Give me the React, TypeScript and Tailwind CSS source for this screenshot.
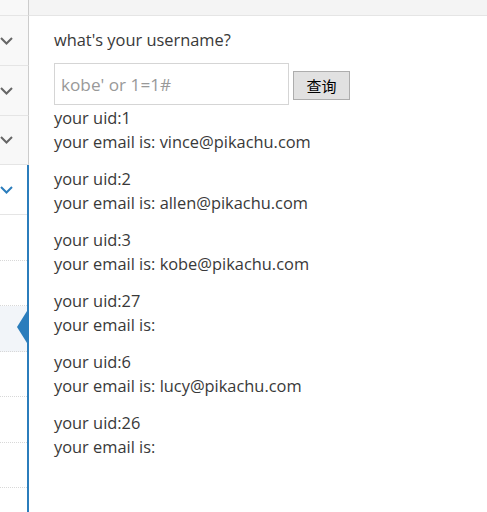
import React from 'react';

const RESULTS = [
  { uid: '1', email: 'vince@pikachu.com' },
  { uid: '2', email: 'allen@pikachu.com' },
  { uid: '3', email: 'kobe@pikachu.com' },
  { uid: '27', email: '' },
  { uid: '6', email: 'lucy@pikachu.com' },
  { uid: '26', email: '' },
];

function Chevron({ color }: { color: string }) {
  return (
    <svg width="13" height="8" viewBox="0 0 13 8" className="shrink-0">
      <polyline points="1,1 6.5,6.5 12,1" fill="none" stroke={color} strokeWidth="2" />
    </svg>
  );
}

function Sidebar() {
  return (
    <aside className="w-[29px] h-full flex flex-col shrink-0">
      {/* collapsed menu groups */}
      <div className="h-[16px] bg-[#f8f8f8] border-b border-r border-[#e5e5e5] border-r-[#cccccc]" />
      {[0, 1].map(i => (
        <div
          key={i}
          className="h-[50px] flex items-center bg-[#f8f8f8] border-b border-r border-[#e5e5e5] border-r-[#cccccc]"
        >
          <Chevron color="#666666" />
        </div>
      ))}
      <div className="h-[49px] flex items-center bg-[#f8f8f8] border-b border-r border-[#e5e5e5] border-r-[#cccccc]">
        <Chevron color="#666666" />
      </div>

      {/* open group */}
      <div className="flex-1 flex flex-col border-r-2 border-[#2b7dbc]">
        <div className="h-[50px] flex items-center bg-white border-b border-[#e5e5e5]">
          <Chevron color="#2b7dbc" />
        </div>
        {[0, 1, 2, 3, 4, 5].map(i => (
          <div
            key={i}
            className={`relative h-[45.5px] shrink-0 border-b border-dotted border-[#d8d8d8] ${
              i === 2 ? 'bg-[#f2f5f9]' : 'bg-white'
            }`}
          >
            {i === 2 && (
              <svg width="10" height="32" viewBox="0 0 10 32" className="absolute right-0 top-[5px]">
                <polygon points="10,0 0,16 10,32" fill="#2b7dbc" />
              </svg>
            )}
          </div>
        ))}
      </div>
    </aside>
  );
}

export default function App() {
  return (
    <div
      className="w-[487px] h-[512px] overflow-hidden flex bg-white text-[#393939]"
      style={{ fontFamily: '"Open Sans", "Noto Sans CJK SC", sans-serif' }}
    >
      <Sidebar />
      <main className="flex-1 flex flex-col min-w-0">
        <div className="h-[16px] bg-[#f4f4f4] border-b border-[#e5e5e5] shrink-0" />
        <div className="pl-[25px] pt-[12px] text-[16.4px] leading-[24px]">
          <p>what's your username?</p>
          <form className="flex items-center gap-[5px] mt-[11px]" onSubmit={e => e.preventDefault()}>
            <input
              className="w-[235px] h-[42px] border border-[#d5d5d5] px-[6px] text-[17.2px] text-[#555] placeholder:text-[#999] outline-none"
              placeholder="kobe' or 1=1#"
            />
            <button
              type="submit"
              className="w-[57px] h-[29px] mt-[3px] -ml-[1px] bg-[#e1e1e1] border border-[#adadad] text-[15px] leading-none text-black"
              style={{ fontFamily: '"Noto Sans CJK SC", sans-serif' }}
            >
              查询
            </button>
          </form>
          <div className="mt-[1px]">
            {RESULTS.map(r => (
              <div key={r.uid} className="mb-[13px]">
                <p>your uid:{r.uid}</p>
                <p>your email is: {r.email}</p>
              </div>
            ))}
          </div>
        </div>
      </main>
    </div>
  );
}
